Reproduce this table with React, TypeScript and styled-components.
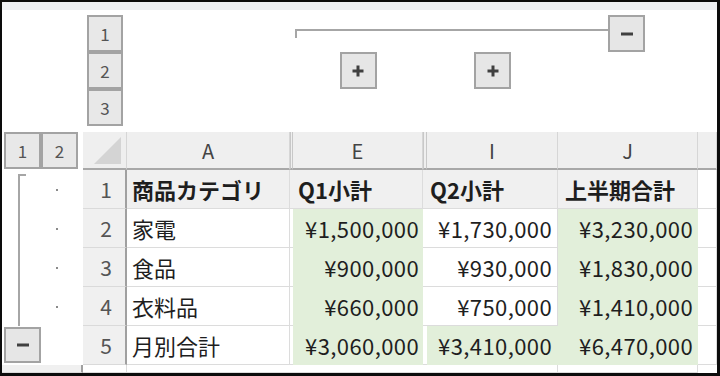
import styled, { createGlobalStyle } from "styled-components";

const GlobalStyle = createGlobalStyle`
  html, body {
    margin: 0;
    padding: 0;
    background: #ffffff;
  }
  body {
    font-family: "Noto Sans CJK JP", "Noto Sans", sans-serif;
  }
`;

const COLS = "81px 44px 163px 3px 130px 4px 131px 140px 1fr";

const Frame = styled.div`
  width: 720px;
  height: 376px;
  box-sizing: border-box;
  border: 2px solid #0c0c0c;
  border-right-width: 3px;
  border-bottom-width: 3px;
  display: flex;
  flex-direction: column;
  overflow: hidden;
  background: #ffffff;
`;

const TopStrip = styled.div`
  height: 8px;
  background: #eef0f3;
  flex: none;
`;

const OutlineTop = styled.div`
  display: grid;
  grid-template-columns: ${COLS};
  grid-template-rows: 37px 37px 37px;
  padding-top: 5px;
  height: 122px;
  box-sizing: border-box;
  flex: none;
`;

const LevelButton = styled.div<{ $w?: number }>`
  width: ${(p) => p.$w ?? 36}px;
  height: 37px;
  box-sizing: border-box;
  border: 2px solid #a3a3a3;
  background: #e8e8e8;
  color: #555555;
  font-size: 17px;
  display: flex;
  align-items: center;
  justify-content: center;
`;

const StackButton = styled(LevelButton)<{ $row: number }>`
  grid-column: 2;
  grid-row: ${(p) => p.$row};
  justify-self: center;
`;

const ToggleButton = styled.div`
  width: 37px;
  height: 37px;
  box-sizing: border-box;
  border: 2px solid #a3a3a3;
  background: #e6e6e6;
  display: flex;
  align-items: center;
  justify-content: center;
  flex: none;
`;

const PlusButton = styled(ToggleButton)<{ $col: number }>`
  grid-row: 2;
  grid-column: ${(p) => p.$col};
  justify-self: center;
`;

const GroupSpan = styled.div`
  grid-row: 1;
  grid-column: 5 / 9;
  display: flex;
  padding-right: 53px;
`;

const GroupLine = styled.div`
  flex: 1;
  height: 7px;
  margin-top: 14px;
  margin-left: 2px;
  border-top: 2px solid #a6a6a6;
  border-left: 2px solid #a6a6a6;
`;

const Sheet = styled.div`
  display: grid;
  grid-template-columns: ${COLS};
  grid-template-rows: 38px 39px 39px 39px 39px 39px 1fr;
  flex: 1;
`;

const HeaderGutter = styled.div`
  display: flex;
  align-items: flex-start;
  padding-left: 2px;
`;

const RowOutline = styled.div`
  grid-column: 1;
  grid-row: 2 / 7;
  display: grid;
  grid-template-columns: 39px 42px;
  grid-template-rows: repeat(5, 39px);
`;

const Bracket = styled.div`
  grid-column: 1;
  grid-row: 1 / 5;
  margin-left: 16px;
  margin-top: 4px;
  width: 6px;
  border-left: 2px solid #a6a6a6;
  border-top: 2px solid #a6a6a6;
`;

const Dot = styled.div<{ $row: number }>`
  grid-column: 2;
  grid-row: ${(p) => p.$row};
  display: flex;
  align-items: center;
  padding-left: 15px;
  &::before {
    content: "";
    width: 2px;
    height: 2px;
    background: #8a8a8a;
  }
`;

const RowMinus = styled(ToggleButton)`
  grid-column: 1;
  grid-row: 5;
  margin-left: 2px;
  margin-top: 1px;
  height: 36px;
`;

const Corner = styled.div`
  background: #efefef;
  border-bottom: 2px solid #a8a8a8;
  border-right: 1px solid #d6d6d6;
  position: relative;
  &::after {
    content: "";
    position: absolute;
    right: 5px;
    bottom: 4px;
    border-left: 27px solid transparent;
    border-bottom: 27px solid #d4d4d4;
  }
`;

const ColHead = styled.div`
  background: #efefef;
  border-bottom: 2px solid #a8a8a8;
  border-right: 1px solid #d6d6d6;
  color: #444444;
  font-size: 20px;
  display: flex;
  align-items: center;
  justify-content: center;
`;

const HiddenMark = styled.div`
  background: #efefef;
  border-bottom: 2px solid #a8a8a8;
  border-left: 1px solid #c8c8c8;
  border-right: 1px solid #c8c8c8;
`;

const RowHead = styled.div`
  background: #f0f0f0;
  border-bottom: 1px solid #dadada;
  border-right: 2px solid #a0a0a0;
  color: #555555;
  font-size: 21px;
  display: flex;
  align-items: center;
  justify-content: center;
  padding-left: 4px;
`;

const fills = {
  white: "#ffffff",
  gray: "#f0f0f0",
  green: "#e2efda",
};

const Cell = styled.div<{
  $fill?: keyof typeof fills;
  $right?: boolean;
  $bold?: boolean;
  $pad?: number;
}>`
  background: ${(p) => fills[p.$fill ?? "white"]};
  border-bottom: 1px solid
    ${(p) => (p.$fill === "green" ? fills.green : "#dcdcdc")};
  border-right: 1px solid
    ${(p) => (p.$fill === "green" ? fills.green : "#dcdcdc")};
  color: #1e1e1e;
  font-size: 22px;
  letter-spacing: ${(p) => (p.$right ? "0.4px" : "0")};
  font-weight: ${(p) => (p.$bold ? 700 : 400)};
  display: flex;
  align-items: center;
  justify-content: ${(p) => (p.$right ? "flex-end" : "flex-start")};
  padding: ${(p) => (p.$right ? `0 ${p.$pad ?? 4}px 0 0` : `0 0 0 ${p.$pad ?? 5}px`)};
  white-space: nowrap;
  overflow: hidden;
`;

const Gap = styled.div<{ $fill?: keyof typeof fills }>`
  background: ${(p) => fills[p.$fill ?? "white"]};
  border-bottom: 1px solid #dcdcdc;
`;

const PlusIcon = () => (
  <svg width="14" height="14" viewBox="0 0 14 14">
    <path d="M7 1.5v11M1.5 7h11" stroke="#404040" strokeWidth="3" />
  </svg>
);

const MinusIcon = () => (
  <svg width="14" height="14" viewBox="0 0 14 14">
    <path d="M1 7h12" stroke="#404040" strokeWidth="3" />
  </svg>
);

type RowData = {
  name: string;
  q1: string;
  q2: string;
  total: string;
  q2Fill: keyof typeof fills;
};

const rows: RowData[] = [
  { name: "家電", q1: "¥1,500,000", q2: "¥1,730,000", total: "¥3,230,000", q2Fill: "white" },
  { name: "食品", q1: "¥900,000", q2: "¥930,000", total: "¥1,830,000", q2Fill: "white" },
  { name: "衣料品", q1: "¥660,000", q2: "¥750,000", total: "¥1,410,000", q2Fill: "white" },
  { name: "月別合計", q1: "¥3,060,000", q2: "¥3,410,000", total: "¥6,470,000", q2Fill: "green" },
];

export default function App() {
  return (
    <>
      <GlobalStyle />
      <Frame>
        <TopStrip />
        <OutlineTop>
          <StackButton $row={1}>1</StackButton>
          <StackButton $row={2}>2</StackButton>
          <StackButton $row={3}>3</StackButton>
          <GroupSpan>
            <GroupLine />
            <ToggleButton>
              <MinusIcon />
            </ToggleButton>
          </GroupSpan>
          <PlusButton $col={5}>
            <PlusIcon />
          </PlusButton>
          <PlusButton $col={7}>
            <PlusIcon />
          </PlusButton>
        </OutlineTop>

        <Sheet>
          {/* column header row */}
          <HeaderGutter>
            <LevelButton $w={37}>1</LevelButton>
            <LevelButton $w={37}>2</LevelButton>
          </HeaderGutter>
          <Corner />
          <ColHead>A</ColHead>
          <HiddenMark />
          <ColHead>E</ColHead>
          <HiddenMark />
          <ColHead>I</ColHead>
          <ColHead>J</ColHead>
          <ColHead />

          <RowOutline>
            <Bracket />
            <Dot $row={1} />
            <Dot $row={2} />
            <Dot $row={3} />
            <Dot $row={4} />
            <RowMinus>
              <MinusIcon />
            </RowMinus>
          </RowOutline>

          {/* row 1 */}
          <RowHead>1</RowHead>
          <Cell $fill="gray" $bold>商品カテゴリ</Cell>
          <Gap $fill="gray" />
          <Cell $fill="gray" $bold $pad={5}>Q1小計</Cell>
          <Gap $fill="gray" />
          <Cell $fill="gray" $bold $pad={3}>Q2小計</Cell>
          <Cell $fill="gray" $bold $pad={7}>上半期合計</Cell>
          <Cell />

          {rows.map((r, i) => (
            <DataRow key={r.name} row={r} index={i + 2} />
          ))}

          {/* partial row 6 */}
          <RowHead />
          <Cell />
          <Gap />
          <Cell />
          <Gap />
          <Cell />
          <Cell />
          <Cell />
        </Sheet>
      </Frame>
    </>
  );
}

function DataRow({ row, index }: { row: RowData; index: number }) {
  return (
    <>
      <RowHead>{index}</RowHead>
      <Cell>{row.name}</Cell>
      <Gap />
      <Cell $fill="green" $right $pad={3}>{row.q1}</Cell>
      <Gap />
      <Cell $fill={row.q2Fill} $right $pad={5}>{row.q2}</Cell>
      <Cell $fill="green" $right $pad={4}>{row.total}</Cell>
      <Cell />
    </>
  );
}
